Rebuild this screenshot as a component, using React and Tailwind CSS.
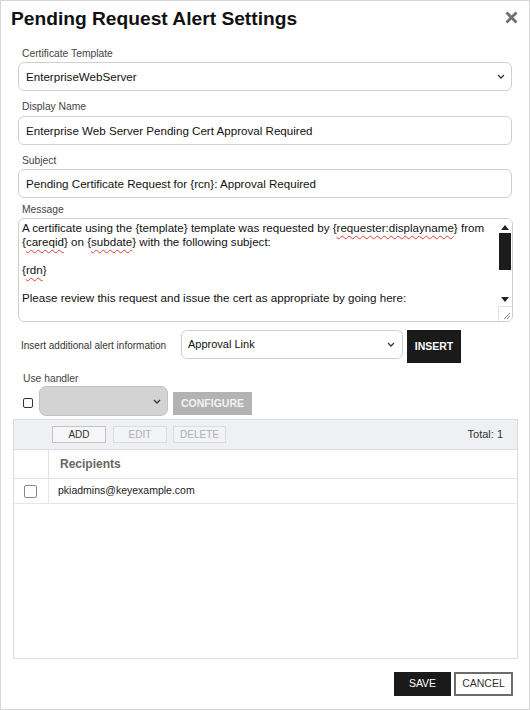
import React from "react";

const Chevron = ({ className = "" }) => (
  <svg width="8" height="5" viewBox="0 0 8 5" className={className}>
    <path d="M1 1l3 3 3-3" fill="none" stroke="#333" strokeWidth="1.3" />
  </svg>
);

const Label = ({ children, className = "" }) => (
  <div className={`pl-[4px] text-[10.3px] leading-[12px] text-[#444] ${className}`}>{children}</div>
);

const Field = ({ value, select }) => (
  <div className="flex items-center justify-between h-[29px] rounded-[6px] border border-[#cfcfcf] bg-white pl-[7px] pr-[6px] text-[11.6px] text-[#111]">
    <span className="whitespace-nowrap">{value}</span>
    {select && <Chevron />}
  </div>
);

const Sp = ({ children }) => (
  <span className="underline decoration-wavy decoration-[#e53935] decoration-1 underline-offset-[3px]">{children}</span>
);

export default function App() {
  return (
    <div className="w-[530px] h-[710px] border border-[#d6d6d6] bg-white flex flex-col relative font-['Liberation_Sans',Arial,sans-serif] text-[#111]">
      <div className="pt-[7px] pl-[10px] text-[19.2px] leading-[22px] font-bold text-[#111]">Pending Request Alert Settings</div>
      <svg width="13" height="13" viewBox="0 0 13 13" className="absolute left-[504px] top-[10px]">
        <path d="M1.5 1.5l10 10M11.5 1.5l-10 10" stroke="#707070" strokeWidth="2.8" />
      </svg>

      <div className="px-[17px] flex flex-col">
        <Label className="mt-[18px] mb-[2px]">Certificate Template</Label>
        <Field value="EnterpriseWebServer" select />

        <Label className="mt-[10px] mb-[3px]">Display Name</Label>
        <Field value="Enterprise Web Server Pending Cert Approval Required" />

        <Label className="mt-[10px] mb-[2px]">Subject</Label>
        <Field value="Pending Certificate Request for {rcn}: Approval Required" />

        <Label className="mt-[6px] mb-[2px]">Message</Label>
        <div className="relative h-[104px] mr-[-1px] rounded-[6px] border border-[#cfcfcf] overflow-hidden">
          <div className="pl-[3px] pt-[2px] text-[11.6px] leading-[13.9px] text-[#111] whitespace-nowrap">
            <div>A certificate using the {"{template}"} template was requested by {"{"}<Sp>requester:displayname</Sp>{"}"} from</div>
            <div>{"{"}<Sp>careqid</Sp>{"}"} on {"{"}<Sp>subdate</Sp>{"}"} with the following subject:</div>
            <div>&nbsp;</div>
            <div>{"{"}<Sp>rdn</Sp>{"}"}</div>
            <div>&nbsp;</div>
            <div>Please review this request and issue the cert as appropriate by going here:</div>
            <div>&nbsp;</div>
            <div>{"{"}<Sp>apprlink</Sp>{"}"}</div>
          </div>
          <div className="absolute right-0 top-0 w-[14px] h-[88px] bg-white">
            <svg width="8" height="5" viewBox="0 0 8 5" className="absolute left-[3px] top-[6px]">
              <path d="M0 5L4 0L8 5Z" fill="#222" />
            </svg>
            <div className="absolute left-[1px] top-[14px] w-[12px] h-[37px] bg-[#1c1c1c]" />
            <svg width="8" height="5" viewBox="0 0 8 5" className="absolute left-[3px] top-[78px]">
              <path d="M0 0L8 0L4 5Z" fill="#222" />
            </svg>
          </div>
          <div className="absolute right-0 bottom-0 w-[14px] h-[15px] bg-white border-l border-t border-[#e2e2e2]">
            <svg width="10" height="10" viewBox="0 0 10 10" className="absolute right-[1px] bottom-[1px]">
              <path d="M9 3L3 9M9 6L6 9" stroke="#888" strokeWidth="1" />
            </svg>
          </div>
        </div>

        <div className="mt-[8px] flex items-start">
          <div className="pl-[3px] w-[163px] pt-[10px] text-[10px] leading-[12px] text-[#333]">Insert additional alert information</div>
          <div className="flex items-center justify-between w-[222px] h-[29px] rounded-[6px] border border-[#cfcfcf] pl-[6px] pr-[7px] text-[11px] text-[#111]">
            <span className="-mt-[1px]">Approval Link</span>
            <Chevron />
          </div>
          <button className="ml-[4px] w-[54px] h-[33px] bg-[#1a1a1a] text-white text-[10.5px] font-bold">INSERT</button>
        </div>

        <Label className="mt-[10px] mb-[1px] !pl-[5px] text-[#333]">Use handler</Label>
        <div className="flex items-start">
          <div className="ml-[5px] mt-[12px] w-[10px] h-[10px] rounded-[2px] border-[1.5px] border-[#333]" />
          <div className="ml-[6px] flex items-center justify-end w-[129px] h-[30px] rounded-[7px] border border-[#c2c2c2] bg-[#d3d3d3] pr-[6px]">
            <Chevron />
          </div>
          <button className="ml-[5px] mt-[6px] w-[79px] h-[23px] bg-[#b3b3b3] text-[#f2f2f2] text-[10.5px] font-bold">CONFIGURE</button>
        </div>

        <div className="mt-[3px] ml-[-5px] mr-[-6px] h-[240px] border border-[#dcdcdc] flex flex-col">
          <div className="h-[30px] bg-[#eef0f4] border-b border-[#dcdde2] flex items-center pl-[38px] pr-[14px]">
            <button className="w-[54px] h-[17px] border border-[#c4c4c4] bg-[#f6f6f6] text-[10px] text-[#333]">ADD</button>
            <button className="ml-[7px] w-[54px] h-[17px] border border-[#dcdcdc] bg-[#f2f3f6] text-[10px] text-[#b0b0b0]">EDIT</button>
            <button className="ml-[6px] w-[53px] h-[17px] border border-[#dcdcdc] bg-[#f2f3f6] text-[10px] text-[#b0b0b0]">DELETE</button>
            <div className="ml-auto text-[11px] text-[#333]">Total: 1</div>
          </div>
          <div className="h-[29px] border-b border-[#e0e0e0] flex">
            <div className="w-[35px] border-r border-[#e0e0e0]" />
            <div className="pl-[11px] flex items-center text-[12px] font-bold text-[#666]">Recipients</div>
          </div>
          <div className="h-[25px] border-b border-[#e6e6e6] flex">
            <div className="w-[35px] border-r border-[#e6e6e6] flex items-center">
              <div className="ml-[10px] w-[13px] h-[13px] rounded-[2px] border border-[#8a8a8a]" />
            </div>
            <div className="pl-[9px] flex items-center text-[10.5px] text-[#222]">pkiadmins@keyexample.com</div>
          </div>
        </div>

        <div className="mt-[13px] flex justify-end mr-[-1px]">
          <button className="w-[57px] h-[24px] bg-[#1a1a1a] text-white text-[10.5px]">SAVE</button>
          <button className="ml-[3px] w-[59px] h-[24px] border-2 border-[#6b6b6b] bg-white text-[#333] text-[10.5px]">CANCEL</button>
        </div>
      </div>
    </div>
  );
}
